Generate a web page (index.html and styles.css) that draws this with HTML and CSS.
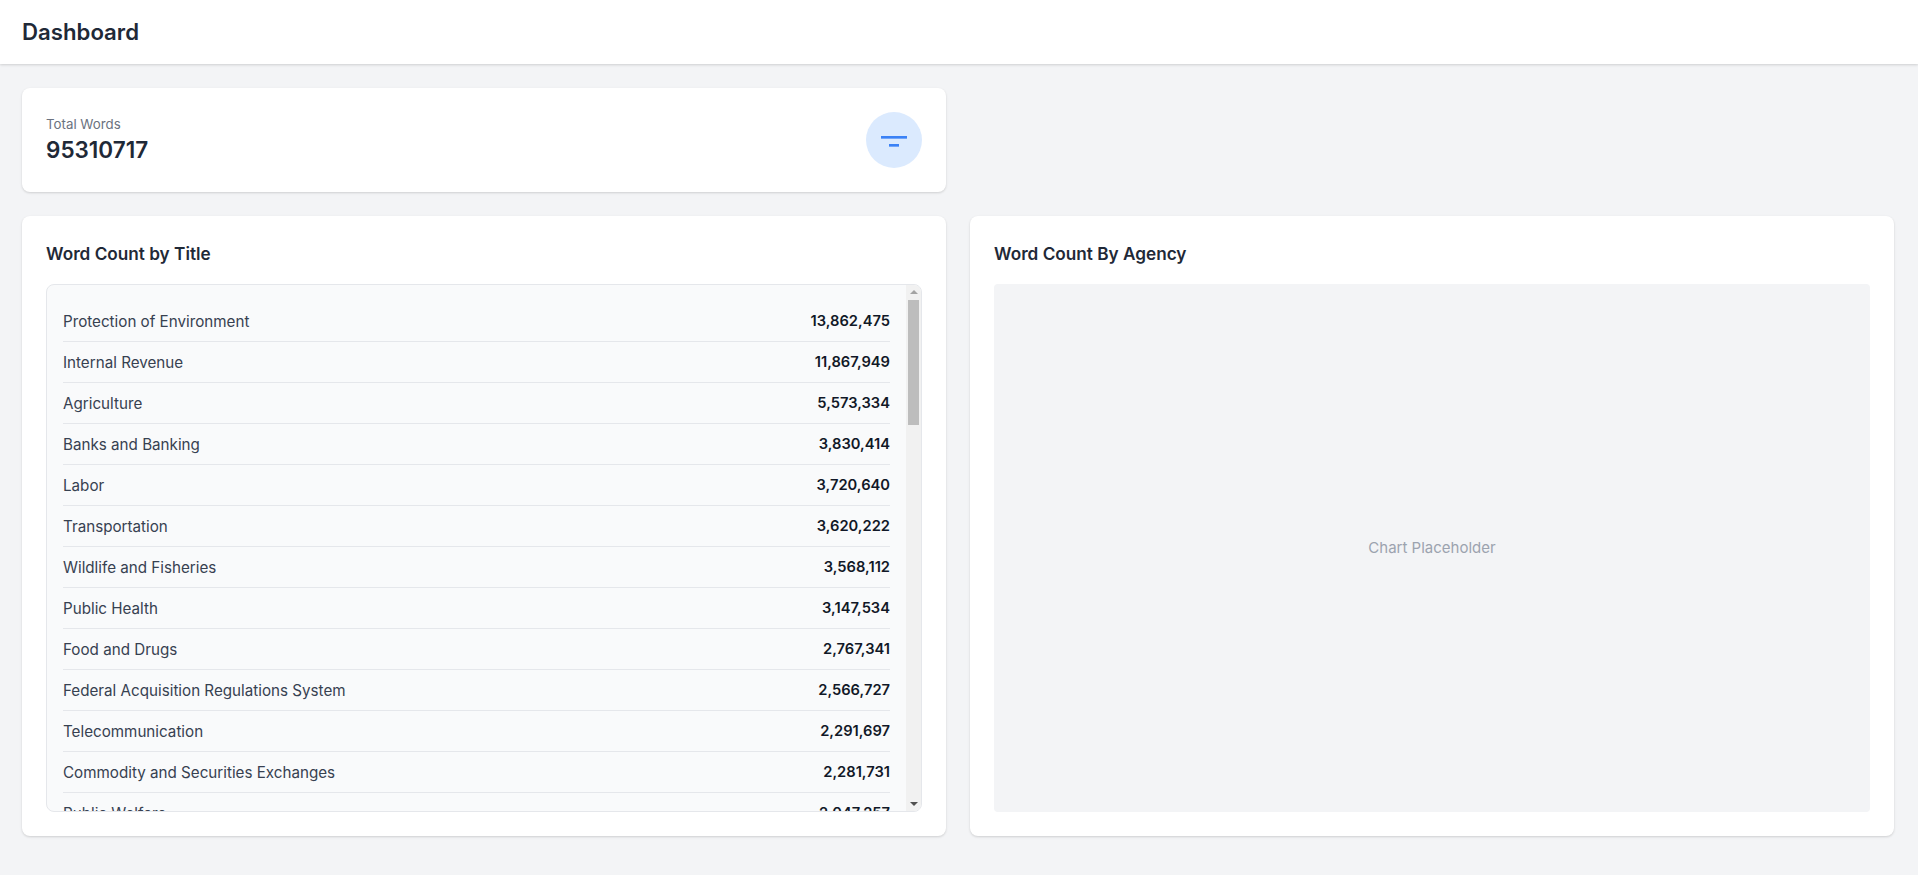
FILE: index.html
```html
<!DOCTYPE html>
<html lang="en">
<head>
  <meta charset="UTF-8">
  <meta name="viewport" content="width=device-width, initial-scale=1.0">
  <title>Dashboard</title>
  <link rel="stylesheet" href="styles.css">
</head>
<body>
  <header class="topbar">
    <h1>Dashboard</h1>
  </header>

  <main class="content">
    <div class="stat-row">
      <section class="card stat-card">
        <div class="stat-text">
          <p class="stat-label">Total Words</p>
          <p class="stat-value">95310717</p>
        </div>
        <div class="stat-icon">
          <svg width="32" height="32" viewBox="0 0 32 32" fill="none" stroke="#3b82f6" stroke-width="2.67">
            <path d="M3 13.33H29"/>
            <path d="M11 21.33H21"/>
          </svg>
        </div>
      </section>
    </div>

    <div class="chart-row">
      <section class="card panel">
        <h2>Word Count by Title</h2>
        <div class="title-box">
          <div class="title-list">
            <div class="title-row"><span>Protection of Environment</span><strong>13,862,475</strong></div>
            <div class="title-row"><span>Internal Revenue</span><strong>11,867,949</strong></div>
            <div class="title-row"><span>Agriculture</span><strong>5,573,334</strong></div>
            <div class="title-row"><span>Banks and Banking</span><strong>3,830,414</strong></div>
            <div class="title-row"><span>Labor</span><strong>3,720,640</strong></div>
            <div class="title-row"><span>Transportation</span><strong>3,620,222</strong></div>
            <div class="title-row"><span>Wildlife and Fisheries</span><strong>3,568,112</strong></div>
            <div class="title-row"><span>Public Health</span><strong>3,147,534</strong></div>
            <div class="title-row"><span>Food and Drugs</span><strong>2,767,341</strong></div>
            <div class="title-row"><span>Federal Acquisition Regulations System</span><strong>2,566,727</strong></div>
            <div class="title-row"><span>Telecommunication</span><strong>2,291,697</strong></div>
            <div class="title-row"><span>Commodity and Securities Exchanges</span><strong>2,281,731</strong></div>
            <div class="title-row"><span>Public Welfare</span><strong>2,047,257</strong></div>
          </div>
          <div class="scroll-rail">
            <span class="arrow-up"></span>
            <span class="scroll-thumb"></span>
            <span class="arrow-down"></span>
          </div>
        </div>
      </section>

      <section class="card panel">
        <h2>Word Count By Agency</h2>
        <div class="chart-placeholder">Chart Placeholder</div>
      </section>
    </div>
  </main>
</body>
</html>
```

FILE: styles.css
```css
* {
  box-sizing: border-box;
}

body {
  margin: 0;
  height: 875px;
  overflow: hidden;
  background-color: #f3f4f6;
  font-family: Inter, "Noto Sans", sans-serif;
  color: #1f2937;
}

h1, h2, p {
  margin: 0;
}

.topbar {
  height: 64px;
  padding: 0 22px 1px;
  display: flex;
  align-items: center;
  background-color: #fff;
  box-shadow: 0 1px 3px rgba(0, 0, 0, 0.1), 0 1px 2px rgba(0, 0, 0, 0.06);
}

.topbar h1 {
  font-size: 22.2px;
  font-weight: 600;
}

.content {
  padding: 24px 24px 24px 22px;
  display: flex;
  flex-direction: column;
  gap: 24px;
}

.stat-row, .chart-row {
  display: grid;
  grid-template-columns: 1fr 1fr;
  gap: 24px;
}

.card {
  background-color: #fff;
  border-radius: 8px;
  box-shadow: 0 1px 3px rgba(0, 0, 0, 0.1), 0 1px 2px rgba(0, 0, 0, 0.06);
}

.stat-card {
  height: 104px;
  padding: 0 24px;
  display: flex;
  align-items: center;
  justify-content: space-between;
}

.stat-text {
  padding-bottom: 2px;
}

.stat-label {
  font-size: 13.3px;
  line-height: 20px;
  margin-bottom: 1px;
  color: #6b7280;
}

.stat-value {
  font-size: 22.5px;
  line-height: 30px;
  font-weight: 600;
}

.stat-icon {
  width: 56px;
  height: 56px;
  border-radius: 50%;
  background-color: #dbeafe;
  display: flex;
  align-items: center;
  justify-content: center;
}

.panel {
  height: 620px;
  padding: 24px;
  display: flex;
  flex-direction: column;
}

.panel h2 {
  font-size: 17.2px;
  font-weight: 600;
  line-height: 28px;
  margin-bottom: 16px;
}

.title-box {
  height: 528px;
  display: flex;
  overflow: hidden;
  background-color: #f9fafb;
  border: 1px solid #e5e7eb;
  border-radius: 8px;
}

.title-list {
  flex: 1;
  padding: 16px;
  overflow: hidden;
}

.title-row {
  height: 41px;
  display: flex;
  align-items: center;
  justify-content: space-between;
  border-bottom: 1px solid #e5e7eb;
  font-size: 15.2px;
  color: #374151;
}

.title-row strong {
  font-size: 14.7px;
  font-weight: 600;
  color: #111827;
}

/* scrollbars are hidden in the headless browser, so the rail is drawn */
.scroll-rail {
  width: 15px;
  padding: 5px 2px;
  display: flex;
  flex-direction: column;
  align-items: center;
  background-color: #f1f1f1;
}

.arrow-up, .arrow-down {
  width: 0;
  height: 0;
  border-left: 4px solid transparent;
  border-right: 4px solid transparent;
}

.arrow-up {
  border-bottom: 4px solid #a3a3a3;
}

.arrow-down {
  margin-top: auto;
  border-top: 4px solid #505050;
}

.scroll-thumb {
  width: 11px;
  height: 125px;
  margin-top: 6px;
  background-color: #bdbdbd;
}

.chart-placeholder {
  height: 528px;
  padding-bottom: 1px;
  display: flex;
  align-items: center;
  justify-content: center;
  background-color: #f3f4f6;
  border-radius: 4px;
  font-size: 15px;
  color: #9ca3af;
}
```
